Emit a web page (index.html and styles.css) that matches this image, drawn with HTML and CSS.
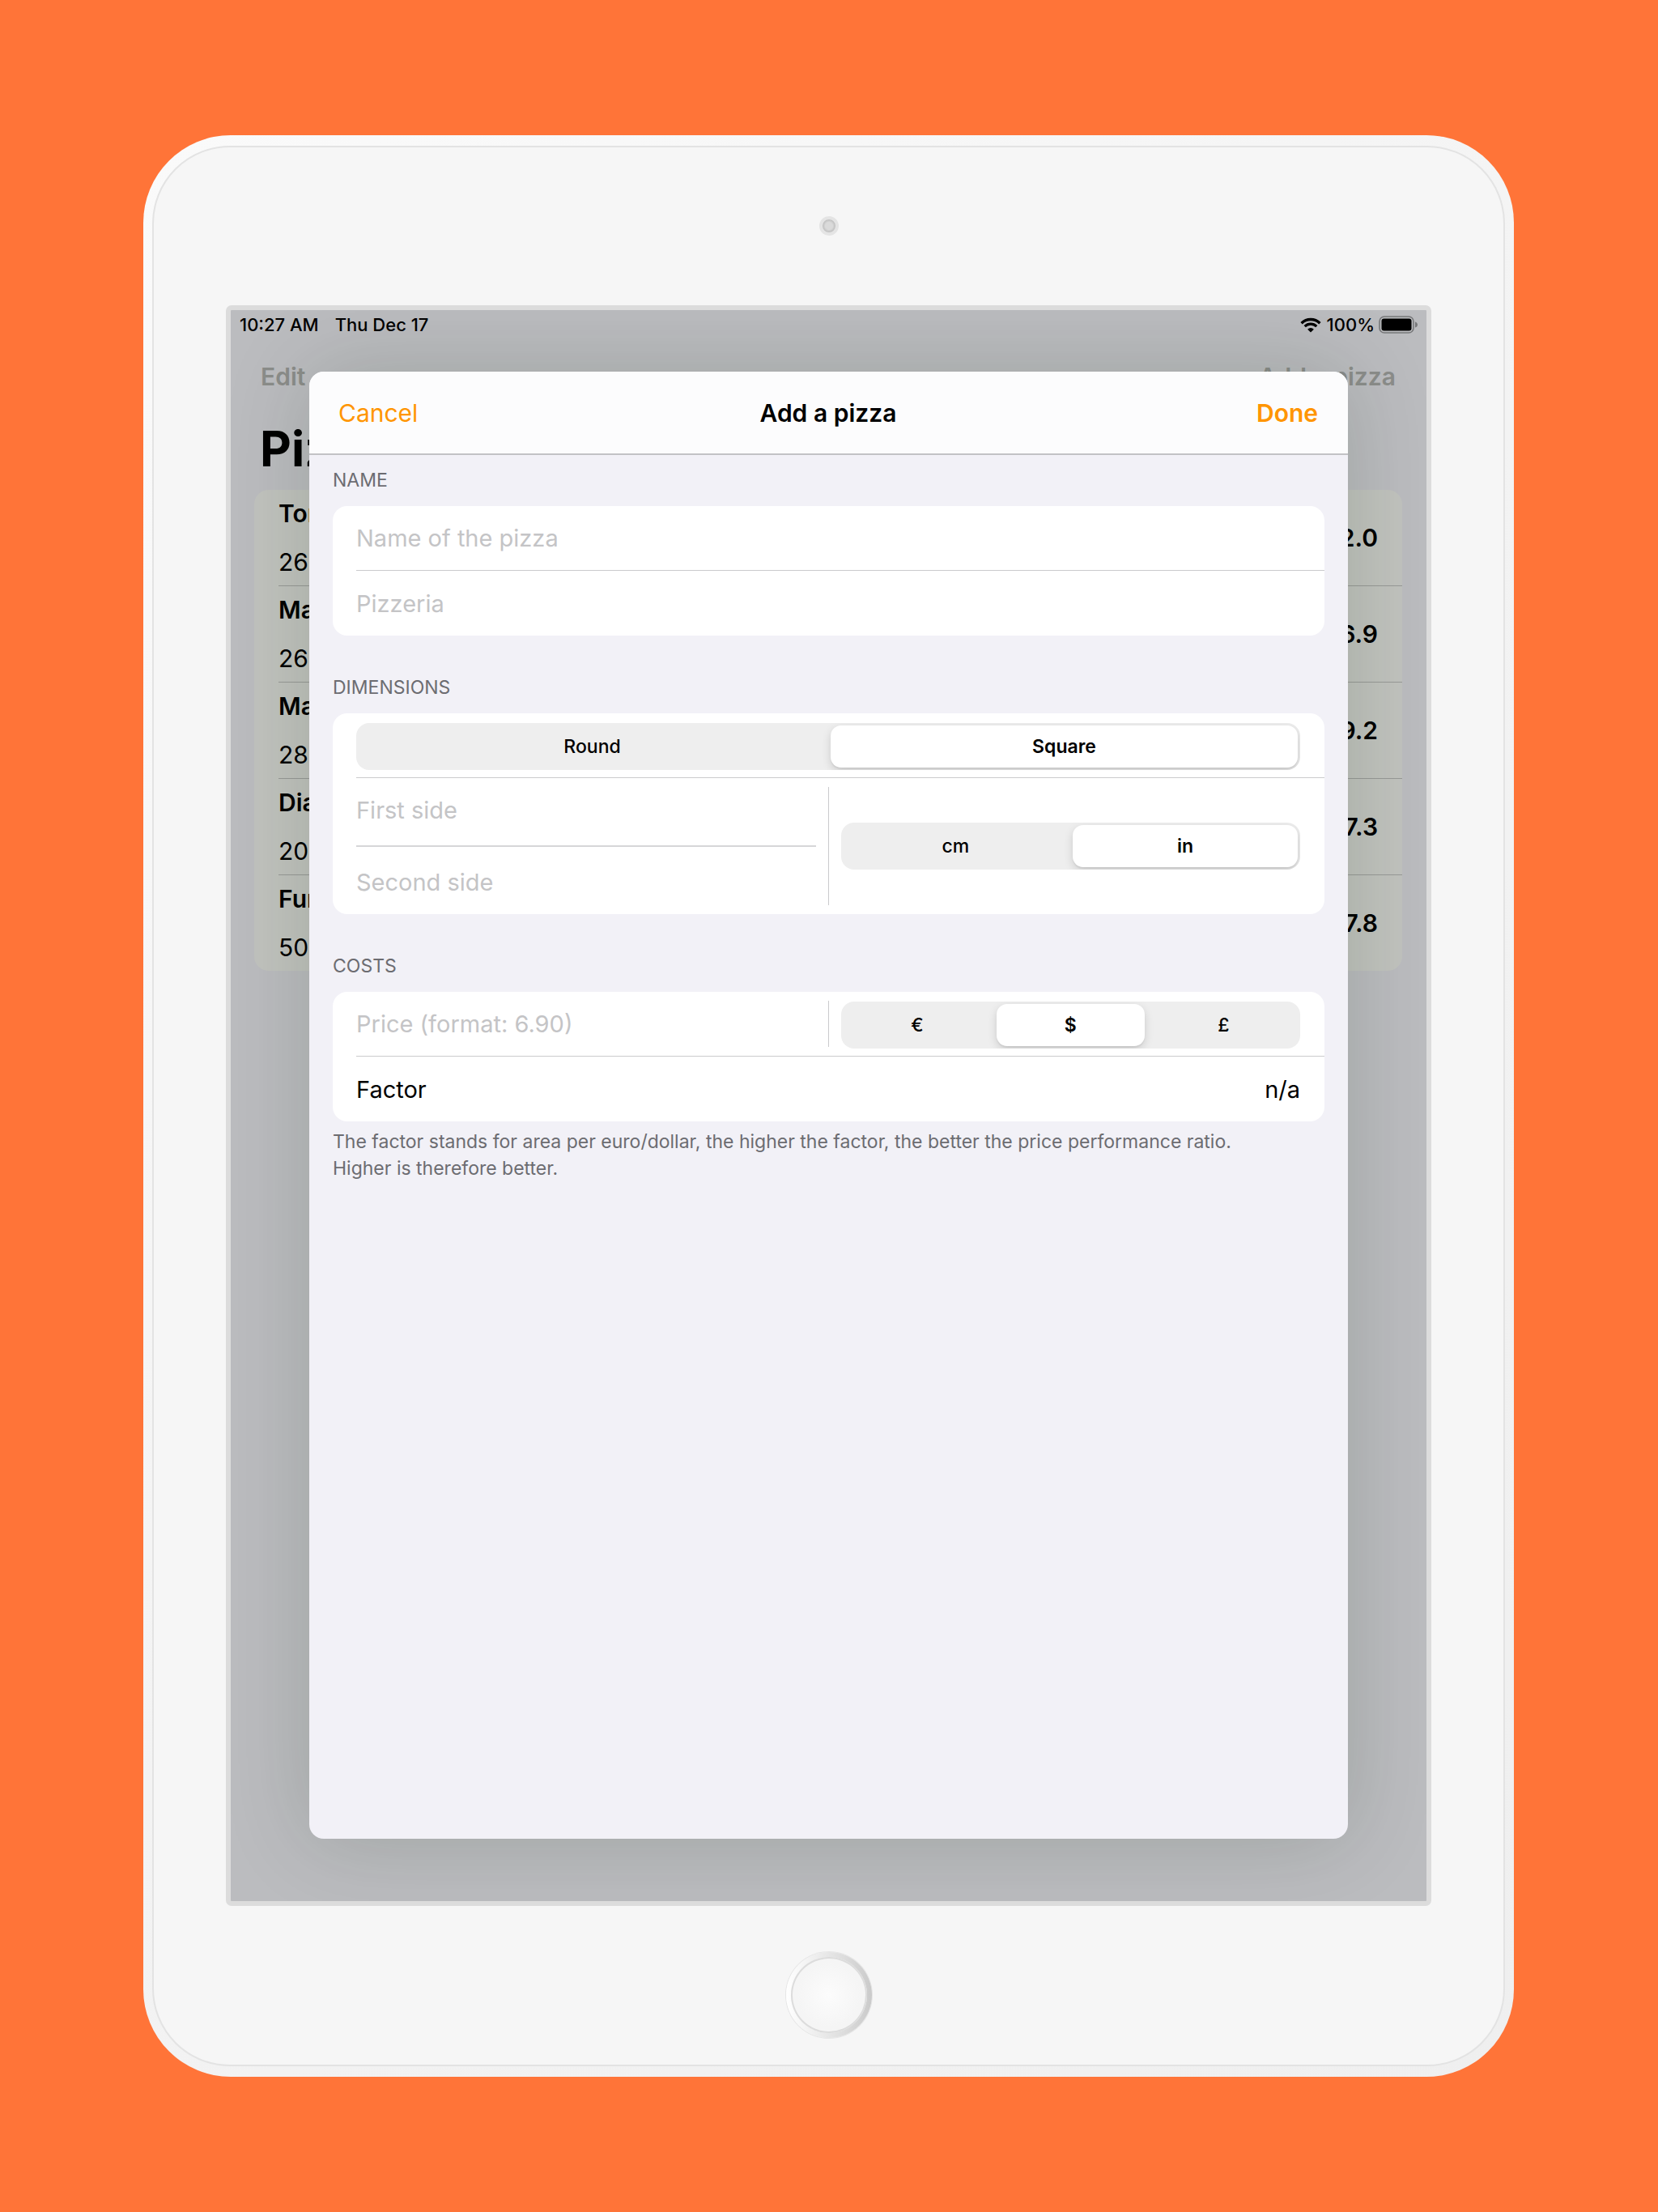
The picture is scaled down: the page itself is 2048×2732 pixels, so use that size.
FILE: index.html
```html
<!DOCTYPE html>
<html lang="en">
<head>
<meta charset="utf-8">
<meta name="viewport" content="width=device-width, initial-scale=1">
<title>Add a pizza</title>
<link rel="stylesheet" href="styles.css">
</head>
<body>
<div class="device">
  <div class="face">
    <div class="bezel bezel-top"><span class="camera"></span></div>
    <div class="screen">
      <div class="home">
        <div class="status">
          <span>10:27 AM</span>
          <span>Thu Dec 17</span>
          <span class="status-right">
            <svg class="wifi" viewBox="0 0 26 19" aria-hidden="true">
              <path d="M1.600 7.200A16.200 16.200 0 0 1 24.400 7.200" fill="none" stroke="#000" stroke-width="3.400"/>
              <path d="M5.700 11.200A10.400 10.400 0 0 1 20.300 11.200" fill="none" stroke="#000" stroke-width="3.200"/>
              <path d="M13 18.600L9.100 14.700A5.600 5.600 0 0 1 16.900 14.700Z"/>
            </svg>
            <span>100%</span>
            <svg class="battery" viewBox="0 0 48 22" aria-hidden="true">
              <rect x="1" y="1" width="42" height="20" rx="6" fill="none" stroke="#77787a" stroke-width="1.600"/>
              <rect x="3.500" y="3.500" width="37" height="15" rx="3"/>
              <path d="M45 7.500C47 8 48 9.500 48 11S47 14 45 14.500Z" fill="#77787a"/>
            </svg>
          </span>
        </div>
        <nav class="nav">
          <button type="button" disabled>Edit</button>
          <button type="button" disabled>Add a pizza</button>
        </nav>
        <h1 class="title">Pizzas</h1>
        <ul class="list">
          <li><div><strong>Tonno</strong><span>26 cm</span></div><b>12.0</b></li>
          <li><div><strong>Margherita</strong><span>26 cm</span></div><b>16.9</b></li>
          <li><div><strong>Margherita</strong><span>28 cm</span></div><b>19.2</b></li>
          <li><div><strong>Diavolo</strong><span>20 cm</span></div><b>17.3</b></li>
          <li><div><strong>Funghi</strong><span>50 cm</span></div><b>17.8</b></li>
        </ul>
      </div>
      <form class="sheet" role="dialog" aria-labelledby="sheet-title">
        <header class="sheet-head">
          <button type="button" class="cancel">Cancel</button>
          <h2 id="sheet-title">Add a pizza</h2>
          <button type="button" class="done">Done</button>
        </header>
        <section class="group">
          <h3>NAME</h3>
          <div class="card">
            <div class="row"><input class="field" type="text" aria-label="Name of the pizza" placeholder="Name of the pizza"></div>
            <div class="row"><input class="field" type="text" aria-label="Pizzeria" placeholder="Pizzeria"></div>
          </div>
        </section>
        <section class="group">
          <h3>DIMENSIONS</h3>
          <div class="card">
            <div class="row">
              <div class="segments" role="radiogroup" aria-label="Shape">
                <label><input type="radio" name="shape"><span>Round</span></label>
                <label><input type="radio" name="shape" checked><span>Square</span></label>
              </div>
            </div>
            <div class="row split">
              <div class="sides">
                <input class="field" type="text" aria-label="First side" placeholder="First side">
                <hr>
                <input class="field" type="text" aria-label="Second side" placeholder="Second side">
              </div>
              <span class="divider"></span>
              <div class="segments" role="radiogroup" aria-label="Unit">
                <label><input type="radio" name="unit"><span>cm</span></label>
                <label><input type="radio" name="unit" checked><span>in</span></label>
              </div>
            </div>
          </div>
        </section>
        <section class="group">
          <h3>COSTS</h3>
          <div class="card">
            <div class="row split">
              <input class="field" type="text" aria-label="Price" placeholder="Price (format: 6.90)">
              <span class="divider"></span>
              <div class="segments" role="radiogroup" aria-label="Currency">
                <label><input type="radio" name="currency"><span>€</span></label>
                <label><input type="radio" name="currency" checked><span>$</span></label>
                <label><input type="radio" name="currency"><span>£</span></label>
              </div>
            </div>
            <div class="row result"><span>Factor</span><output>n/a</output></div>
          </div>
          <p class="note">The factor stands for area per euro/dollar, the higher the factor, the better the price performance ratio. Higher is therefore better.</p>
        </section>
      </form>
    </div>
    <div class="bezel bezel-bottom"><span class="home-button"></span></div>
  </div>
</div>
</body>
</html>
```
FILE: styles.css
```css
*, *::before, *::after { box-sizing: border-box; }

body {
  margin: 0;
  min-height: 100vh;
  display: flex;
  padding: 167px 178px 167px 177px;
  background: #ff7438;
  font-family: Inter, "Liberation Sans", sans-serif;
  font-size: 30px;
  color: #000;
}

h1, h2, h3, p, ul { margin: 0; padding: 0; }

button {
  border: 0;
  padding: 0;
  background: none;
  font: inherit;
}

/* Tablet body */
.device {
  flex: 1;
  min-width: 0;
  display: flex;
  padding: 13px 11px;
  border-radius: 108px;
  background: linear-gradient(135deg, #fafafa, #f3f3f3 50%, #efefef);
}

.face {
  flex: 1;
  min-width: 0;
  display: flex;
  flex-direction: column;
  padding: 0 89px;
  border: 2px solid #e3e3e3;
  border-radius: 96px;
  background: #f6f6f6;
}

.bezel {
  display: flex;
  align-items: center;
  justify-content: center;
}

.bezel-top { height: 195px; padding-bottom: 2px; }
.bezel-bottom { height: 196px; padding-top: 23px; }

.camera {
  width: 24px;
  height: 24px;
  border: 4px solid #e4e4e4;
  border-radius: 50%;
  background: radial-gradient(#dadada 40%, #c2c2c2 65%, #d4d4d4);
}

.home-button {
  width: 106px;
  height: 106px;
  border: 6px solid transparent;
  border-radius: 50%;
  background:
    radial-gradient(#fcfcfc, #f5f5f5 60%) padding-box,
    linear-gradient(90deg, #fff, #e6e6e6 50%, #cacaca) border-box;
  box-shadow: inset 0 0 0 2px #dcdcdc, 0 0 0 1px #e6e6e6;
}

.screen {
  flex: 1;
  display: grid;
  border: 6px solid #dcdcdc;
  border-radius: 7px;
  background: #bbbcbf;
  overflow: hidden;
}

.home, .sheet { grid-area: 1 / 1; min-width: 0; }

/* Pizza list behind the sheet */
.status {
  display: flex;
  gap: 20px;
  height: 36px;
  padding: 0 11px;
  align-items: center;
  font-size: 22px;
  font-weight: 500;
}

.status-right {
  display: flex;
  align-items: center;
  gap: 5px;
  margin-left: auto;
}

.wifi { width: 26px; height: 19px; margin-right: 2px; }
.battery { width: 48px; height: 22px; }

.nav {
  display: flex;
  justify-content: space-between;
  padding: 0 38px 0 37px;
  line-height: 92px;
  font-weight: 600;
}

.nav button { color: #8b8d8a; }

.title {
  padding-left: 36px;
  font-size: 60px;
  line-height: 86px;
}

.list {
  margin: 8px 30px 0 29px;
  padding-left: 30px;
  list-style: none;
  border-radius: 18px;
  background: #c1c3be;
}

.list li {
  display: flex;
  align-items: center;
  justify-content: space-between;
  height: 119px;
  padding-right: 30px;
  border-bottom: 1px solid #989a97;
}

.list li:last-child { height: 118px; border-bottom: 0; }
.list div { display: grid; line-height: 60px; }
.list strong, .list b { font-weight: 600; }

/* Form sheet */
.sheet {
  z-index: 1;
  margin: 76px 97px 77px;
  border-radius: 18px;
  background: #f2f1f7;
  box-shadow: 0 0 110px rgba(15, 30, 0, 0.16);
}

.sheet-head {
  display: grid;
  grid-template-columns: 1fr auto 1fr;
  align-items: center;
  height: 103px;
  padding: 0 37px 0 36px;
  border-bottom: 2px solid #c2c2c5;
  border-radius: 18px 18px 0 0;
  background: #fcfcfd;
}

.sheet-head h2 { font-size: 30px; font-weight: 600; }
.cancel, .done { color: #ff9500; }
.cancel { justify-self: start; }
.done { justify-self: end; font-weight: 600; }

.group { padding: 0 29px; }
.group + .group { margin-top: 33px; }

.group h3 {
  font-size: 23px;
  font-weight: 400;
  line-height: 63px;
  color: #6c6c71;
}

.card {
  padding-left: 29px;
  border-radius: 18px;
  background: #fff;
  font-size: 29px;
}

.row {
  display: flex;
  align-items: center;
  height: 80px;
  padding-right: 30px;
}

.row:not(:last-child) { border-bottom: 1px solid #cbcbcd; }
.row > .segments { margin-top: 3px; }

.field {
  flex: 1;
  min-width: 0;
  width: 100%;
  height: 79px;
  padding: 0;
  border: 0;
  outline: 0;
  background: none;
  font: inherit;
  color: #000;
}

.field::placeholder { color: #c4c4c6; opacity: 1; }

.split { gap: 15px; }
.split > .segments { flex: 1; }

.split:last-child {
  height: 168px;
}

.split:last-child > .segments { margin-top: 0; }

.sides { flex: 1; min-width: 0; }
.sides .field { display: block; }

.sides hr {
  height: 2px;
  margin: 4px 0;
  border: 0;
  background: #d6d6d8;
}

.divider {
  align-self: stretch;
  width: 1px;
  margin: 11px 0;
  background: #cbcbcd;
}

.segments {
  flex: 1;
  display: flex;
  height: 58px;
  border-radius: 16px;
  background: #eee;
  overflow: hidden;
}

.segments label {
  flex: 1;
  display: flex;
  padding: 3px;
}

.segments input {
  position: absolute;
  opacity: 0;
  pointer-events: none;
}

.segments span {
  flex: 1;
  border-radius: 13px;
  font-size: 23px;
  font-weight: 500;
  line-height: 52px;
  text-align: center;
}

.segments input:checked + span {
  background: #fff;
  font-weight: 600;
  box-shadow: 0 4px 12px rgba(0, 0, 0, 0.14), 0 2px 2px rgba(0, 0, 0, 0.06);
}

.result { justify-content: space-between; }

.note {
  padding: 9px 60px 0 0;
  font-size: 23px;
  line-height: 33px;
  color: #6c6c71;
}
```
